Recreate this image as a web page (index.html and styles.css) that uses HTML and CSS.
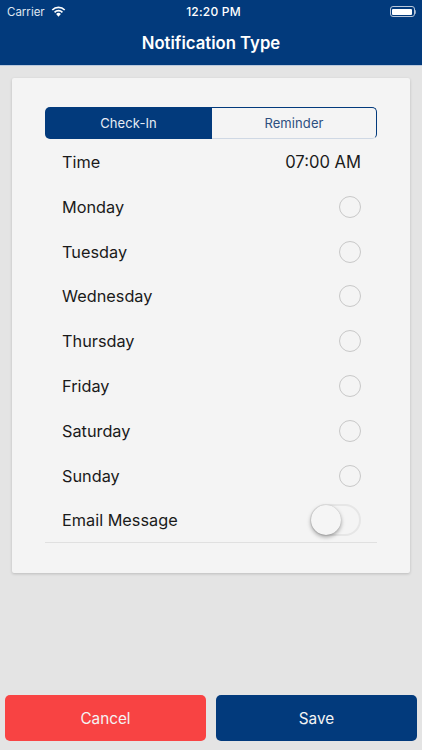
FILE: index.html
```
<!DOCTYPE html>
<html lang="en">
<head>
<meta charset="utf-8">
<title>Notification Type</title>
<link rel="stylesheet" href="styles.css">
</head>
<body>
<div class="screen">
  <header class="nav">
    <div class="status">
      <div class="status-left">
        <span>Carrier</span>
        <svg class="wifi" viewBox="0 0 16 12" width="15" height="11"><path d="M8 11.6 5.4 8.8a3.6 3.6 0 0 1 5.2 0z" fill="#fff"/><path d="M3.7 6.9a6 6 0 0 1 8.6 0" fill="none" stroke="#fff" stroke-width="1.8"/><path d="M1.2 4.4a9.6 9.6 0 0 1 13.6 0" fill="none" stroke="#fff" stroke-width="1.8"/></svg>
      </div>
      <div class="status-time">12:20 PM</div>
      <div class="status-right">
        <span class="battery"><span class="battery-fill"></span></span><span class="battery-tip"></span>
      </div>
    </div>
    <h1 class="title">Notification Type</h1>
  </header>

  <main class="content">
    <section class="card">
      <div class="segments">
        <div class="segment active">Check-In</div>
        <div class="segment">Reminder</div>
      </div>
      <div class="row"><span>Time</span><span class="time">07:00 AM</span></div>
      <div class="row"><span>Monday</span><span class="radio"></span></div>
      <div class="row"><span>Tuesday</span><span class="radio"></span></div>
      <div class="row"><span>Wednesday</span><span class="radio"></span></div>
      <div class="row"><span>Thursday</span><span class="radio"></span></div>
      <div class="row"><span>Friday</span><span class="radio"></span></div>
      <div class="row"><span>Saturday</span><span class="radio"></span></div>
      <div class="row"><span>Sunday</span><span class="radio"></span></div>
      <div class="row row-last"><span>Email Message</span><span class="toggle"><span class="knob"></span></span></div>
    </section>
  </main>

  <footer class="actions">
    <button class="btn cancel">Cancel</button>
    <button class="btn save">Save</button>
  </footer>
</div>
</body>
</html>
```
FILE: styles.css
```
* { box-sizing: border-box; }
html, body { margin: 0; padding: 0; }
body { font-family: Inter, "Liberation Sans", sans-serif; }
.screen {
  width: 422px; height: 750px; background: #e4e4e4;
  display: flex; flex-direction: column; overflow: hidden;
}
.nav { background: #023a7c; height: 66px; color: #fff; border-bottom: 1px solid #b9c8dc; flex: none; }
.status {
  height: 22px; display: grid; grid-template-columns: 1fr auto 1fr;
  align-items: center; padding: 1px 6px 0 7px; font-size: 11.5px; color: #fff;
}
.status-left { display: flex; align-items: center; gap: 6px; color: #dfe6f0; }
.status-time { font-weight: 500; font-size: 12px; letter-spacing: .2px; padding-left: 4px; }
.status-right { display: flex; justify-content: flex-end; align-items: center; }
.battery { width: 25px; height: 11px; border: 1px solid #b9c7da; border-radius: 3px; padding: 1.5px; display: block; }
.battery-fill { display: block; height: 100%; background: #fff; border-radius: 1px; }
.battery-tip { width: 1.5px; height: 4px; background: #8fa5c2; border-radius: 0 1px 1px 0; }
.title { margin: 0; text-align: center; font-size: 16.7px; font-weight: 600; line-height: 20px; padding-top: 11px; }

.content { flex: 1; padding: 12px 12px 0; }
.card {
  background: #f4f4f4; height: 495px; border-radius: 2px; padding: 29px 33px 0;
  box-shadow: 0 1px 3px rgba(0,0,0,.18);
}
.segments { display: flex; height: 32px; margin-bottom: .6px; }
.segment {
  flex: 1; display: flex; align-items: center; justify-content: center; font-size: 13px; color: #2d4f80; letter-spacing: .1px;
  border: 1px solid #023a7c; border-left: 0; border-bottom-color: #cfd8e4; border-radius: 0 5px 5px 0;
}
.segment.active { background: #023a7c; color: #e6ecf4; border: 0; border-radius: 5px 0 0 5px; flex: 0 0 167px; }
.row {
  height: 44.8px; display: flex; align-items: center; justify-content: space-between;
  padding: 0 16px 0 17px; font-size: 16.3px; color: #1a1a1a;
}
.row-last { height: 45.4px; border-bottom: 1px solid #e0e0e0; }
.time { font-size: 16.6px; }
.radio { width: 22px; height: 22px; border: 1px solid #c8c8c8; border-radius: 50%; }
.toggle { width: 51px; height: 32px; border: 2px solid #e6e6e6; border-radius: 16px; display: block; position: relative; }
.knob {
  position: absolute; left: -1px; top: -1px; width: 30px; height: 30px; border-radius: 50%;
  background: #f5f5f5; box-shadow: 0 2px 4px rgba(0,0,0,.35), 0 0 1px rgba(0,0,0,.2);
}
.actions { display: flex; gap: 10px; padding: 0 5px 9px 5px; flex: none; }
.btn {
  flex: 1; height: 46px; border: 0; border-radius: 5px; color: #f4f4f4;
  font-family: inherit; font-size: 15.3px; padding: 0;
}
.cancel { background: #f84343; }
.save { background: #023a7c; }
```
